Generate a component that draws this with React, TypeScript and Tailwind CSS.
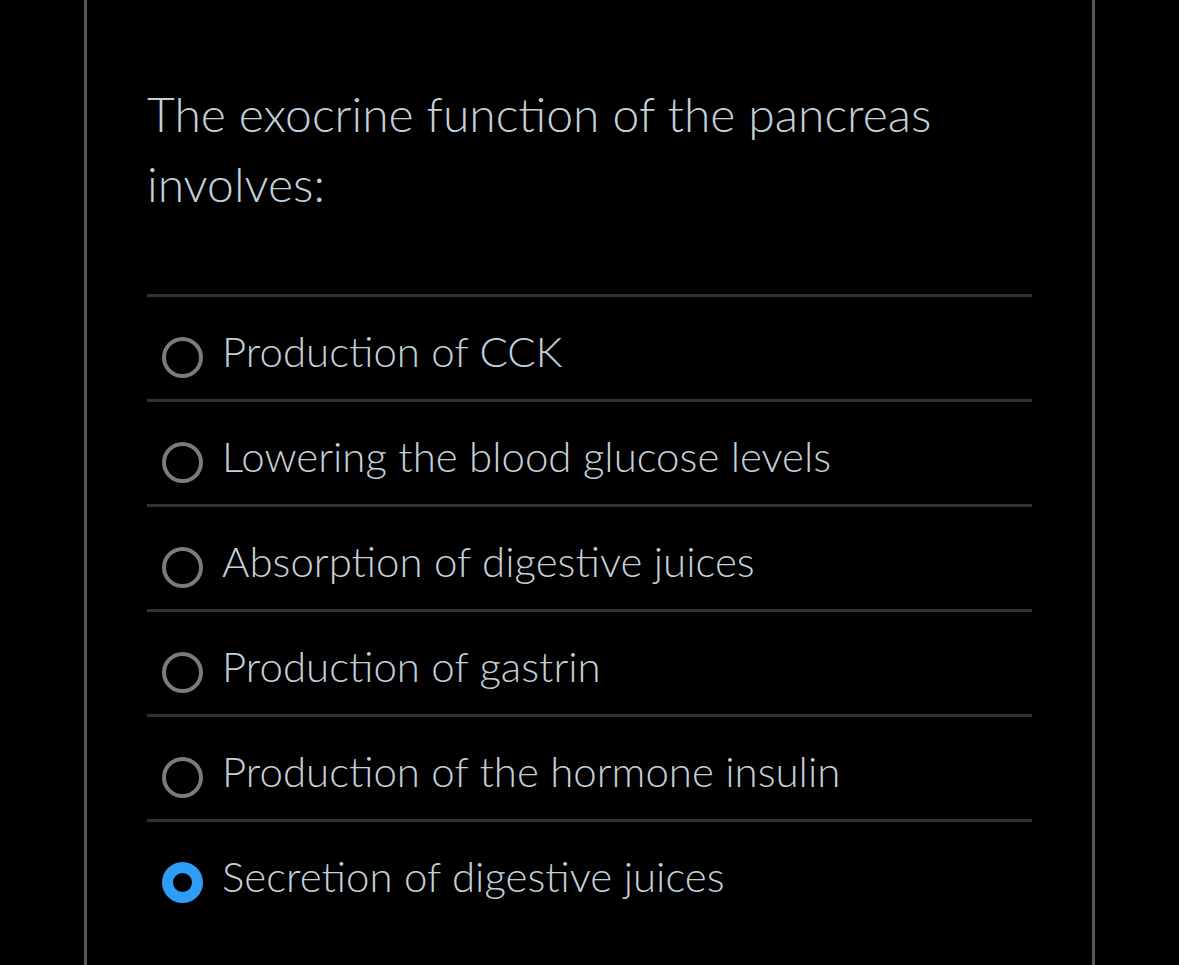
import React from "react";

const options = [
  { label: "Production of CCK", selected: false },
  { label: "Lowering the blood glucose levels", selected: false },
  { label: "Absorption of digestive juices", selected: false },
  { label: "Production of gastrin", selected: false },
  { label: "Production of the hormone insulin", selected: false },
  { label: "Secretion of digestive juices", selected: true },
];

export default function App() {
  return (
    <div
      className="min-h-[965px] w-full bg-black"
      style={{ fontFamily: "Lato, 'Noto Sans', sans-serif" }}
    >
      <div className="mx-auto min-h-[965px] w-[1011px] border-x-[3px] border-[#575757] px-[60px] pt-[79px]">
        <h1 className="text-[48px] font-light leading-[70px] text-[#c4d0d9]">
          The exocrine function of the pancreas involves:
        </h1>
        <div className="mt-[75px]">
          {options.map((o) => (
            <div
              key={o.label}
              className="flex items-start gap-[19px] border-t-[3px] border-[#313131] pl-[15px] pt-[30px] pb-[21px]"
            >
              <div className="mt-[10px] flex h-[41px] w-[41px] shrink-0 items-center justify-center">
                {o.selected ? (
                  <div className="h-[41px] w-[41px] rounded-full border-[11px] border-[#2f9df4] bg-black" />
                ) : (
                  <div className="h-[41px] w-[41px] rounded-full border-[4px] border-[#7b7b7b]" />
                )}
              </div>
              <span className="text-[42px] font-light leading-[48px] text-[#c4d0d9]">
                {o.label}
              </span>
            </div>
          ))}
        </div>
      </div>
    </div>
  );
}
